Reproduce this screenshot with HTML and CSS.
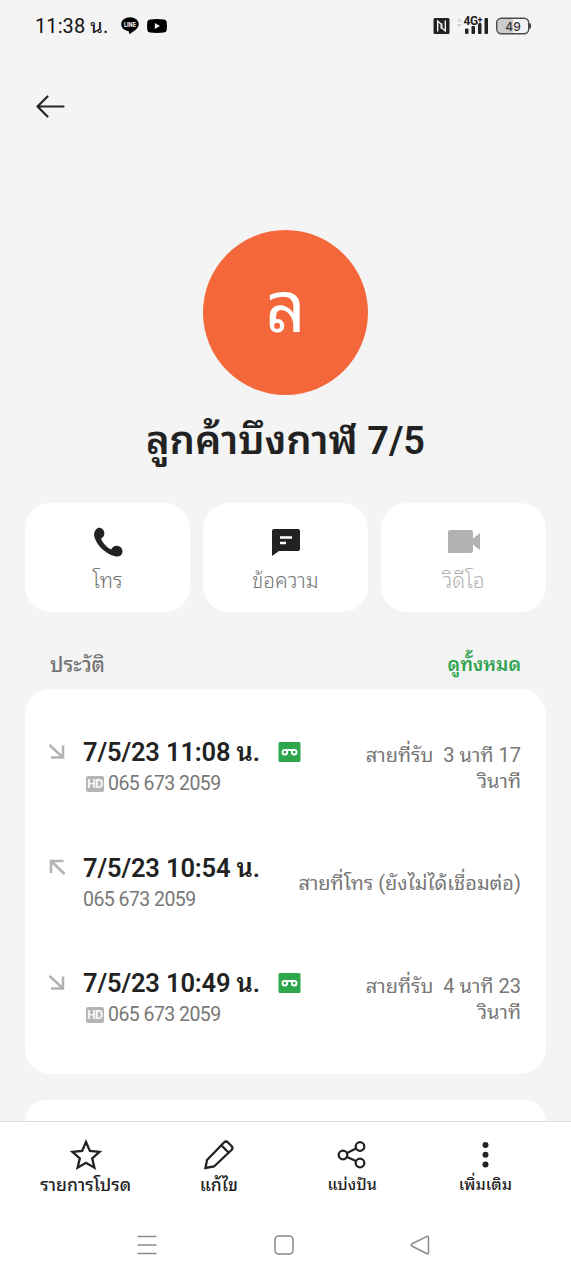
FILE: index.html
```html
<!DOCTYPE html>
<html lang="th">
<head>
<meta charset="utf-8">
<title>ลูกค้าบึงกาฬ 7/5</title>
<link rel="stylesheet" href="styles.css">
</head>
<body>
<svg class="defs" width="0" height="0">
  <symbol id="incoming" viewBox="0 0 18 18"><path d="M.5 2 14 14.500M14 2.500V14.500H2" fill="none" stroke="currentColor" stroke-width="2.500"/></symbol>
  <symbol id="outgoing" viewBox="0 0 18 18"><path d="M15.500 16 2 3M2 15V3h12.500" fill="none" stroke="currentColor" stroke-width="2.500"/></symbol>
  <symbol id="tape" viewBox="0 0 22 20"><rect width="22" height="20" rx="1.500" fill="#2ea64c"/><g fill="none" stroke="#fff" stroke-width="1.900"><circle cx="6.300" cy="10.200" r="2.300"/><circle cx="15.700" cy="10.200" r="2.300"/><path d="M6.300 8h9.400"/></g></symbol>
</svg>
<main class="screen">
  <header class="status">
    <span class="clock">11:38 น.</span>
    <svg class="line-icon" width="18" height="18" viewBox="0 0 18 18"><path d="M9 .3c-4.900 0-8.800 3.100-8.800 7 0 3.600 3.200 6.400 7.300 6.900.8.200.4 1.200.5 2 .1 1.100.7.700 2.300-.3 3.200-2 7.500-5 7.500-8.600 0-3.900-3.900-7-8.800-7z"/><text x="9" y="9.600" class="line-text" textLength="12" lengthAdjust="spacingAndGlyphs">LINE</text></svg>
    <svg class="yt-icon" width="20" height="14" viewBox="0 0 20 14"><path d="M3 .4Q10-.4 17 .4q2.500.2 2.700 2.600.5 4 0 8-.2 2.400-2.700 2.600-7 .8-14 0Q.5 13.400.3 11q-.5-4 0-8Q.5.600 3 .4z"/><path d="m7.800 4 5.200 3-5.200 3z" fill="#f4f4f4"/></svg>
    <span class="grow"></span>
    <svg width="100" height="24" viewBox="0 0 100 24">
      <rect x="0.500" y="4" width="16" height="16" rx="1.500" fill="#222"/><path d="M4.700 17.500V7l3.500 3.300v4.500M12.300 6.500v10.500l-3.600-3.300V9.200" fill="none" stroke="#f4f4f4" stroke-width="1.400"/>
      <path d="m24 7.500 2.500-3 2.500 3zM24 10l2.500 3 2.500-3z" fill="#d2d2d2"/>
      <g fill="#222"><rect x="32" y="14.500" width="3.500" height="5.500" rx="1"/><rect x="38.500" y="12" width="3.500" height="8" rx="1"/><rect x="45" y="9" width="3.500" height="11" rx="1"/><rect x="51.500" y="4" width="3.500" height="16" rx="1"/></g>
      <text x="30.500" y="11.200" class="signal-text">4G<tspan dy="-2" font-size="9">+</tspan></text>
      <path d="M68 5h12v14H68q-4 0-4-4V9q0-4 4-4z" fill="#ccc"/><rect x="63.700" y="4.200" width="32" height="15.600" rx="4.800" fill="none" stroke="#4a4a4a" stroke-width="1.400"/><path d="M97 9.500v5" stroke="#4a4a4a" stroke-width="2"/>
      <text x="80" y="16.500" class="battery-text">49</text>
    </svg>
  </header>
  <div class="topbar"><svg width="30" height="24" viewBox="0 0 30 24"><path d="M2.500 12.500h26M12.500 2.500l-10 10 10 10" fill="none" stroke="#252525" stroke-width="2.200" stroke-linecap="round" stroke-linejoin="round"/></svg></div>
  <section class="profile">
    <div class="avatar">ล</div>
    <h1 class="name"><span class="name-text">ลูกค้าบึงกาฬ</span> 7/5</h1>
  </section>
  <section class="actions">
    <div class="action"><svg width="32" height="32" viewBox="0 0 32 32"><path d="M4 2.500C6-.200 10.500.200 12 4.500c1.200 3.500-.7 5.800-3.100 7.200 2.300 5 6 8.700 10.200 10.900 1.500-3 4.200-4.300 7.200-3.500 3.800 1.200 5.200 5.200 3.500 8.200-1.400 2.300-4.500 2.700-7.700 1.700C12 26 4.500 17.500 2.300 9.500 1.600 7 2.500 4.500 4 2.500z"/></svg><span>โทร</span></div>
    <div class="action"><svg width="32" height="32" viewBox="0 0 32 32"><path d="M2 29V4q0-2 2-2h24q2 0 2 2v18q0 2-2 2H9z"/><path d="M10 10.400h12M10 16h6" fill="none" stroke="#fff" stroke-width="2.500"/></svg><span>ข้อความ</span></div>
    <div class="action disabled"><svg width="32" height="32" viewBox="0 0 32 32"><path d="M0 26V5q0-2 2-2h21q2 0 2 2v19q0 2-2 2zM25 11.500l7-5.500v17l-7-5.500z"/></svg><span>วิดีโอ</span></div>
  </section>
  <section class="section-head"><h2 class="history">ประวัติ</h2><span class="see-all">ดูทั้งหมด</span></section>
  <section class="calls">
    <article class="call"><svg class="direction"><use href="#incoming"/></svg><div class="call-main"><div class="date-line"><span class="date">7/5/23 11:08 น.</span><svg class="tape"><use href="#tape"/></svg></div><div class="phone hd-phone"><span class="hd">HD</span><span>065 673 2059</span></div></div><div class="duration">สายที่รับ&nbsp; 3 นาที 17<br>วินาที</div></article>
    <article class="call"><svg class="direction"><use href="#outgoing"/></svg><div class="call-main"><div class="date-line"><span class="date">7/5/23 10:54 น.</span></div><div class="phone">065 673 2059</div></div><div class="duration">สายที่โทร (ยังไม่ได้เชื่อมต่อ)</div></article>
    <article class="call"><svg class="direction"><use href="#incoming"/></svg><div class="call-main"><div class="date-line"><span class="date">7/5/23 10:49 น.</span><svg class="tape"><use href="#tape"/></svg></div><div class="phone hd-phone"><span class="hd">HD</span><span>065 673 2059</span></div></div><div class="duration">สายที่รับ&nbsp; 4 นาที 23<br>วินาที</div></article>
  </section>
  <div class="next-card"></div>
  <footer class="bottom">
    <nav class="tools">
      <div class="tool large"><svg width="32" height="32" viewBox="0 0 32 32"><path d="m16 3 3.900 9 9.600.9-7.300 6.400 2.200 9.400-8.400-4.900-8.400 4.900 2.200-9.400L2.500 12.900l9.600-.9z"/></svg><span>รายการโปรด</span></div>
      <div class="tool large"><svg width="32" height="32" viewBox="0 0 32 32"><path d="m2.500 29 1.500-8L21 3.500q2-2 4 0L28.500 7q2 2 0 4L11 27.500zM18.500 6.500l7.300 7.300"/></svg><span>แก้ไข</span></div>
      <div class="tool"><svg width="32" height="32" viewBox="0 0 32 32"><circle cx="7" cy="16" r="4.300"/><circle cx="24" cy="7.500" r="4.300"/><circle cx="24" cy="24" r="4.300"/><path d="m11 14 9-4.500M11 18l9 4"/></svg><span>แบ่งปัน</span></div>
      <div class="tool"><svg width="32" height="32" viewBox="0 0 32 32"><g fill="#222" stroke="none"><circle cx="16.500" cy="6" r="3"/><circle cx="16.500" cy="15.700" r="3"/><circle cx="16.500" cy="25.400" r="3"/></g></svg><span>เพิ่มเติม</span></div>
    </nav>
    <nav class="system">
      <svg width="20" height="20" viewBox="0 0 20 20"><path d="M.5 1.500h19M.5 10h19M.5 18.500h19"/></svg>
      <svg width="20" height="20" viewBox="0 0 20 20"><rect x="1" y="1" width="18" height="18" rx="3.500"/></svg>
      <svg width="20" height="20" viewBox="0 0 20 20"><path d="M17 1.300 1.800 9q-1.500 1 0 2L17 18.700q1.500.5 1.500-1V2.300q0-1.500-1.500-1z"/></svg>
    </nav>
  </footer>
</main>
</body>
</html>
```
FILE: styles.css
```css
* { box-sizing: border-box; }
body { margin: 0; background: #f4f4f4; color: #222; font-family: Roboto, "Noto Sans Thai Looped", "Noto Looped Thai", Loma, Waree, Garuda, Umpush, "Droid Sans Thai", "Noto Sans Thai", sans-serif; }
.defs { display: block; }
.screen { width: 571px; height: 1280px; overflow: hidden; display: flex; flex-direction: column; }
.screen > * { flex: none; }
svg { display: block; flex: none; overflow: visible; }
span { white-space: nowrap; }
.status { height: 52px; padding: 0 38px 0 35px; display: flex; align-items: center; }
.clock { width: 86px; line-height: 26px; padding-bottom: 1px; font-size: 20px; color: #111; letter-spacing: .1px; }
.line-icon { margin-top: -1px; }
.line-text { font: 700 5.500px Inter, sans-serif; fill: #fff; text-anchor: middle; }
.yt-icon { margin-left: 8px; }
.grow { flex: 1; }
.signal-text { font: 700 12px Roboto, sans-serif; fill: #222; stroke: #f4f4f4; stroke-width: 1.500px; paint-order: stroke; letter-spacing: -.5px; }
.battery-text { font: 500 12px Inter, sans-serif; fill: #333; text-anchor: middle; }
.topbar { height: 177px; padding: 42px 35px; }
.profile { height: 274px; display: flex; flex-direction: column; align-items: center; }
.avatar { width: 165px; height: 165px; margin-top: .5px; border-radius: 50%; background: #f3673a; color: #fff; font-size: 70px; line-height: 156px; text-align: center; flex: none; }
.name { margin: 18px 0 0; font-size: 38px; line-height: 56px; font-weight: 600; white-space: nowrap; }
.name-text { font-size: 40px; line-height: 1; }
.actions { height: 109px; margin: 0 25px; display: grid; grid-template-columns: repeat(3, 1fr); gap: 13px; }
.action { background: #fff; border-radius: 26px; padding-top: 23.500px; display: flex; flex-direction: column; align-items: center; fill: #222; color: #777; font-size: 20.800px; line-height: 30px; font-weight: 300; gap: 7px; }
.disabled { color: #b2b2b2; fill: #b2b2b2; }
.section-head { height: 77px; padding: 38px 50px 0; display: flex; justify-content: space-between; font-size: 19px; line-height: 30px; }
.history { margin: 0; font-size: 20.500px; font-weight: 500; color: #747474; }
.see-all { font-weight: 600; color: #30a450; }
.calls { height: 385px; margin: 0 25px; padding: 21px 25px 0 24px; background: #fff; border-radius: 26px; }
.call { height: 115.500px; display: flex; align-items: center; }
.direction { width: 18px; height: 18px; color: #b2b2b2; margin: 0 16px 32px 0; }
.date-line { height: 32px; display: flex; align-items: center; }
.date { width: 195px; padding-top: 1px; font-size: 25.500px; line-height: 32px; font-weight: 600; color: #222; letter-spacing: -.15px; }
.tape { width: 23px; height: 20px; }
.phone { height: 32px; line-height: 34px; font-size: 19.500px; letter-spacing: -.55px; color: #777; }
.hd-phone { display: flex; align-items: center; padding-left: 3px; gap: 4px; }
.hd { width: 18px; height: 16px; border-radius: 2px; background: #b5b5b5; color: #fff; font-size: 12px; line-height: 16px; font-weight: 600; letter-spacing: -.5px; text-align: center; }
.duration { margin-left: auto; text-align: right; white-space: nowrap; color: #777; font-size: 20px; line-height: 26px; }
.next-card { height: 21px; margin: 26px 25px 0; background: #fff; border-radius: 26px 26px 0 0; }
.bottom { height: 159px; border-top: 1px solid #ddd; background: #fff; }
.tools { height: 74px; padding: 17px 19px 0; display: grid; grid-template-columns: repeat(4, 1fr); }
.tool { display: flex; flex-direction: column; align-items: center; font-size: 16px; line-height: 28px; font-weight: 500; }
.large { font-size: 17.500px; }
.tool svg { fill: none; stroke: #222; stroke-width: 2.300; }
.system { height: 84px; padding: 39px 141px 0 137px; display: flex; justify-content: space-between; }
.system svg { fill: none; stroke: #8a8a8a; stroke-width: 1.500; }
```
